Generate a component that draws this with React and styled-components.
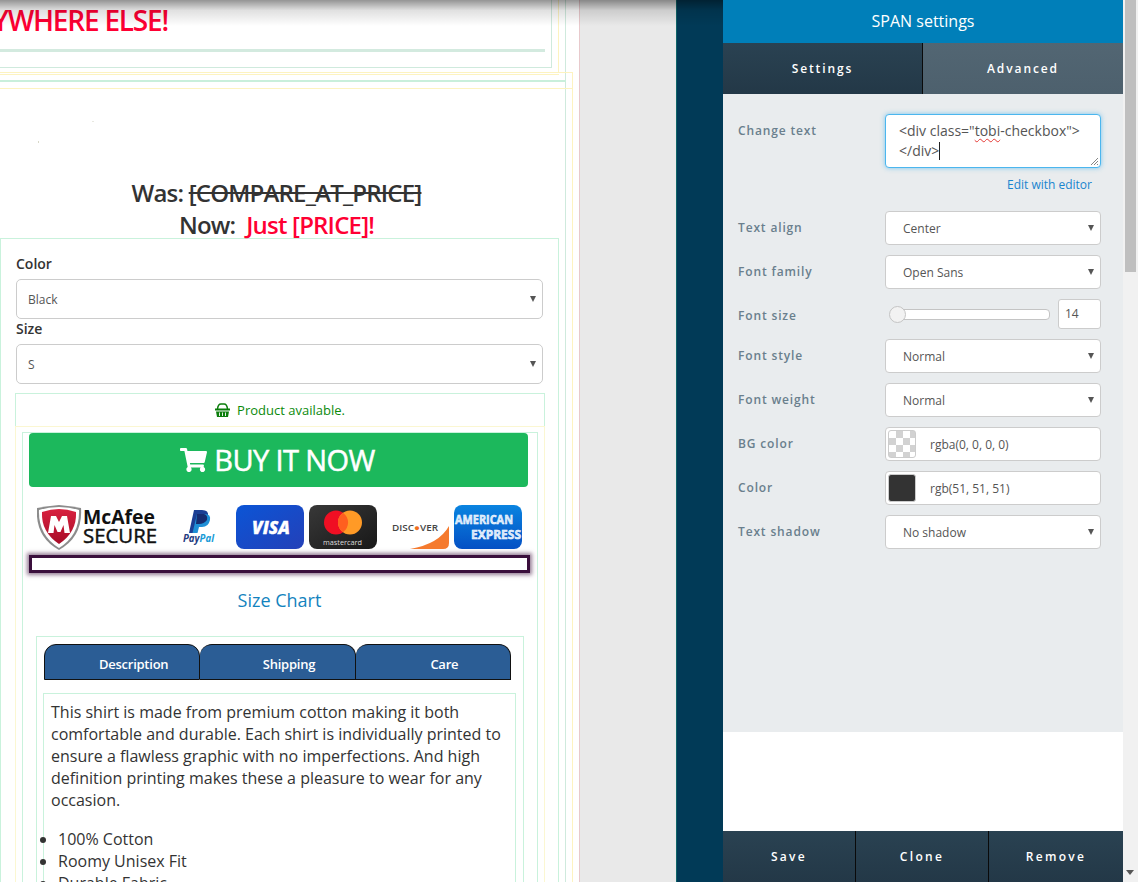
import React from "react";
import styled, { createGlobalStyle } from "styled-components";
import { FaShoppingCart } from "react-icons/fa";

const Global = createGlobalStyle`
  html, body { margin: 0; padding: 0; height: 882px; overflow: hidden; background: #fff; }
  * { box-sizing: border-box; }
  body { font-family: "Open Sans", "Liberation Sans", sans-serif; color: #333; }
`;

const Shell = styled.div`display: flex; width: 1138px; height: 882px; overflow: hidden;`;

const Stage = styled.div`
  position: relative; display: flex; width: 723px; height: 882px; background: #e9e9e9; overflow: hidden;
  &::after {
    content: ""; position: absolute; left: 0; right: 0; top: 0; height: 26px;
    background: linear-gradient(to bottom, rgba(0,0,0,.42), rgba(0,0,0,.12) 40%, rgba(0,0,0,0));
  }
`;
const Page = styled.div`width: 580px; height: 882px; background: #fff; border-right: 1px solid #e8c9cc; overflow: hidden; flex: none;`;
const Gutter = styled.div`flex: 1;`;
const Teal = styled.div`width: 47px; flex: none; background: #013a57; border-left: 1px solid #0d6468;`;

const TopRail = styled.div`width: 566px; height: 72px; border-right: 1px solid #cfeadd;`;
const TopMid = styled.div`width: 559px; height: 72px; border-right: 1px solid #fdf3c0;`;
const TopInner = styled.div`width: 552px; height: 68px; border-right: 1px solid #cfeadd; border-bottom: 1px solid #cfeadd; padding-top: 3px;`;
const Headline = styled.div`
  width: 168px; overflow: hidden; display: flex; justify-content: flex-end; white-space: nowrap;
  font-size: 28px; line-height: 34px; font-weight: 600; letter-spacing: -1.2px; color: #ff0033;
`;
const TopRule = styled.div`width: 545px; height: 3px; margin-top: 12px; background: #d3eadf;`;

const Band = styled.div`width: 573px; height: 17px; border-top: 1px solid #fdf3c0; border-bottom: 1px solid #fdf3c0; border-right: 1px solid #fdf3c0;`;
const BandRail = styled.div`width: 566px; height: 15px; border-right: 1px solid #cfeadd;`;
const BandTick = styled.div`width: 559px; height: 2px; border-bottom: 1px solid #fdf3c0;`;
const BandRule = styled.div`width: 566px; height: 2px; margin-top: 5px; background: #c9efdb;`;

const Body = styled.div`width: 573px; height: 800px; border-right: 1px solid #fdf3c0;`;
const BodyRail = styled.div`width: 566px; height: 800px; border-right: 1px solid #cfeadd;`;
const Specks = styled.svg`display: block; width: 120px; height: 88px;`;
const Price = styled.div`
  width: 553px; height: 61px; text-align: center; font-size: 24px; line-height: 32px; font-weight: 600;
  letter-spacing: -.8px; color: #333;
`;
const Struck = styled.span`text-decoration: line-through;`;
const Red = styled.span`color: #ff0033;`;

const Variants = styled.div`width: 559px; height: 700px; border: 1px solid #c9f2dc; padding: 15px 0 0 14px;`;
const FieldLabel = styled.div`font-size: 14px; line-height: 18px; font-weight: 600; color: #333; padding-top: 1px; margin-bottom: 6px; margin-left: 1px;`;
const BigSelect = styled.div`
  display: flex; align-items: center; width: 527px; height: 40px; margin-left: 1px; padding: 0 6px 0 11px;
  background: #fff; border: 1px solid #ccc; border-radius: 5px; font-size: 12px; color: #555;
`;
const Caret = styled.i`
  margin-left: auto; width: 0; height: 0; border-left: 3.5px solid transparent; border-right: 3.5px solid transparent; border-top: 6px solid #555;
`;
const Available = styled.div`
  display: flex; align-items: center; justify-content: center; gap: 7px; width: 530px; height: 34px; margin-top: 9px;
  border: 1px solid #c9f2dc; font-size: 13px; color: #0b8a0b;
`;
const Basket = styled.svg`width: 15px; height: 14px;`;
const YellowWrap = styled.div`width: 530px; height: 560px; margin-top: -1px; border-top: 1px solid #fbf7d2; border-left: 1px solid #fbf7d2; border-right: 1px solid #fbf7d2; padding: 5px 6px 0;`;
const BuyBox = styled.div`width: 516px; height: 550px; border: 1px solid #c9f2dc; padding: 0 0 0 6px;`;
const BuyButton = styled.div`
  display: flex; align-items: center; justify-content: center; gap: 7px; width: 499px; height: 54px; padding: 0 2px 2px 0;
  background: #1cb85c; border-radius: 4px; color: #fff; font-size: 29px; letter-spacing: -.6px; -webkit-text-stroke: .5px #fff;
  svg { width: 27px; height: 24px; margin-top: 2px; }
`;
const PayStrip = styled.div`
  display: grid; grid-template-columns: 146px 53px 73px 68px 77px 68px; height: 45px; margin: 18px 0 0 8px;
`;
const PayArt = styled.svg`display: block; width: ${p => p.$w}px; height: 45px;`;
const DarkBar = styled.div`
  width: 501px; height: 18px; margin: 5px 0 0 0; background: #fff; border: 3px solid #3a0f3c; box-shadow: 0 0 4px 2px rgba(63,20,64,.55);
`;
const SizeChart = styled.div`width: 501px; margin-top: 14px; text-align: center; font-size: 18px; line-height: 26px; color: #1383be;`;
const TabsBox = styled.div`width: 488px; height: 400px; margin: 23px 0 0 7px; border: 1px solid #c9f2dc; padding: 7px 0 0 7px;`;
const TabRow = styled.div`display: flex; width: 467px; height: 36px;`;
const Tab = styled.div`
  flex: 1; display: flex; align-items: center; justify-content: center; padding: 4px 0 0 23px;
  background: #2b5d95; border: 1px solid #111; border-left-width: ${p => (p.$first ? "1px" : "0")}; border-radius: 12px 12px 0 0;
  color: #fff; font-size: 13px; font-weight: 600; letter-spacing: -.25px;
`;
const Pane = styled.div`width: 473px; height: 300px; margin: 13px 0 0 -1px; border: 1px solid #c9f2dc; padding: 7px 7px 0; font-size: 16px; line-height: 22px; color: #333;`;
const Para = styled.p`margin: 0 0 17px;`;
const Bullets = styled.ul`margin: 0; padding: 0 0 0 7px;`;

const Panel = styled.div`display: flex; flex-direction: column; width: 400px; height: 882px; flex: none;`;
const PanelHead = styled.div`height: 43px; flex: none; background: #007fb9; color: #fff; font-size: 16px; line-height: 43px; text-align: center;`;
const PanelTabs = styled.div`display: flex; height: 51px; flex: none;`;
const PanelTab = styled.div`
  width: 200px; flex: none; display: flex; align-items: center; justify-content: center; color: #fff; font-size: 12px; font-weight: 600; letter-spacing: 1.9px;
  background: ${p => (p.$active ? "linear-gradient(#2a4252,#233847)" : "linear-gradient(#526673,#4d606d)")};
  border-right: ${p => (p.$active ? "1px solid #0a0a0a" : "0")};
`;
const Form = styled.div`height: 638px; flex: none; background: #e9ecee; padding: 20px 22px 0 15px;`;
const Row = styled.div`display: flex; align-items: ${p => p.$top ? "flex-start" : "center"}; height: ${p => p.$h || 34}px; margin-bottom: ${p => p.$mb ?? 10}px;`;
const RowLabel = styled.div`width: 147px; flex: none; font-size: 12px; font-weight: 600; letter-spacing: .85px; color: #6a7f8d; padding-top: ${p => p.$pt || 0}px; padding-bottom: ${p => p.$pb ?? 2}px;`;
const TextBox = styled.div`
  position: relative; width: 216px; height: 54px; padding: 6px 13px; background: #fff; border: 1px solid #4bb6ee; border-radius: 4px;
  box-shadow: 0 0 5px rgba(75,182,238,.7); font-size: 14px; line-height: 20px; color: #555;
`;
const Squiggle = styled.span`text-decoration: underline wavy #e53935 1px; text-underline-offset: 2px;`;
const TextCaret = styled.span`display: inline-block; width: 1px; height: 18px; background: #222; vertical-align: -4px;`;
const Resizer = styled.svg`position: absolute; right: 1px; bottom: 1px; width: 9px; height: 9px;`;
const EditLink = styled.div`height: 17px; margin: 8px 0 18px; padding-right: 9px; text-align: right; font-size: 12px; line-height: 17px; color: #1a85cf;`;
const SmallSelect = styled.div`
  display: flex; align-items: center; width: 216px; height: 34px; padding: 0 6px 0 17px; background: #fff; border: 1px solid #ccc; border-radius: 4px;
  font-size: 12px; color: #555;
`;
const Track = styled.div`position: relative; width: 160px; height: 11px; margin-left: 5px; background: #fff; border: 1px solid #c4c4c4; border-radius: 4px;`;
const Thumb = styled.div`position: absolute; left: -2px; top: -4px; width: 17px; height: 17px; border-radius: 50%; background: #f2f2f2; border: 1px solid #c4c4c4;`;
const NumBox = styled.div`width: 43px; height: 30px; margin-left: 8px; padding-left: 6px; background: #fff; border: 1px solid #ccc; border-radius: 3px; font-size: 12px; line-height: 28px; color: #555;`;
const ColorBox = styled.div`
  display: flex; align-items: center; gap: 14px; width: 216px; height: 34px; padding: 0 2px; background: #fff; border: 1px solid #ccc; border-radius: 4px; font-size: 12px; color: #555;
`;
const Swatch = styled.div`
  width: 28px; height: 28px; border: 1px solid #ccc; border-radius: 3px; background-color: ${p => p.$color || "#fff"};
  ${p => p.$checker && `background-image: conic-gradient(#d2d2d2 25%, #fff 0 50%, #d2d2d2 0 75%, #fff 0); background-size: 14px 14px;`}
`;
const Spare = styled.div`flex: 1; background: #fff;`;
const Footer = styled.div`display: flex; height: 51px; flex: none;`;
const FootBtn = styled.div`
  width: ${p => p.$w}px; flex: none; display: flex; align-items: center; justify-content: center; color: #fff; font-size: 12px; font-weight: 600; letter-spacing: 2.3px;
  background: linear-gradient(#2a4252,#233847); border-left: ${p => (p.$first ? "0" : "1px solid #0a0a0a")};
`;

const Bar = styled.div`position: relative; width: 15px; flex: none; background: #f1f1f1;`;
const BarThumb = styled.div`position: absolute; left: 2px; top: 0; width: 11px; height: 272px; background: #bfbfbf;`;
const BarArrow = styled.i`
  position: absolute; left: 3px; top: 870px; width: 0; height: 0; border-left: 4px solid transparent; border-right: 4px solid transparent; border-top: 5px solid #555;
`;

function McAfee() {
  return (
    <PayArt $w={146} viewBox="0 0 146 45">
      <defs><linearGradient id="sg" x1="0" y1="0" x2="0" y2="1"><stop offset="0" stopColor="#d8213f" /><stop offset="1" stopColor="#a80d28" /></linearGradient></defs>
      <path d="M0 3 Q11 1 22 0 Q33 1 44 3 Q46 32 22 45 Q-2 32 0 3Z" fill="#8c8c8c" />
      <path d="M2 5 Q12 2 22 2 Q32 2 42 5 Q43 30 22 43 Q1 30 2 5Z" fill="#fff" />
      <path d="M5 7 Q14 4 22 4 Q30 4 39 7 Q40 27 22 39 Q4 27 5 7Z" fill="url(#sg)" />
      <path d="M11 28 L14 11 L19 11 L22 17 L25 11 L30 11 L33 28 L27.500 28 L26.500 20 L23.500 27 L20.500 27 L17.500 20 L16.500 28Z" fill="#fff" />
      <text x="46" y="19" fontFamily="Open Sans" fontWeight="700" fontSize="19" fill="#111" textLength="72" lengthAdjust="spacingAndGlyphs">McAfee</text>
      <text x="46" y="38" fontFamily="Open Sans" fontWeight="400" fontSize="20" fill="#111" stroke="#111" strokeWidth=".45" textLength="74" lengthAdjust="spacingAndGlyphs">SECURE</text>
    </PayArt>
  );
}
function PayPal() {
  return (
    <PayArt $w={53} viewBox="0 0 53 45">
      <path d="M11 5 h8 q7 0 6 6 q-1.500 8 -9 8 h-3 l-1.500 9 h-5.500Z" fill="#1c3f94" />
      <path d="M14 9 h8 q6 0 5 6 q-1.500 7 -8 7 h-3 l-1.500 6 h-5Z" fill="#1f8fd6" />
      <path d="M14 9 h7 q4 1 3 6 q-3 4 -8 4 h-3Z" fill="#172c70" />
      <text x="0" y="37" fontFamily="Open Sans" fontWeight="700" fontStyle="italic" fontSize="10" fill="#253b80" textLength="31" lengthAdjust="spacingAndGlyphs">Pay<tspan fill="#179bd7">Pal</tspan></text>
    </PayArt>
  );
}
function Visa() {
  return (
    <PayArt $w={73} viewBox="0 0 73 45">
      <defs><linearGradient id="vg" x1="0" y1="0" x2="1" y2="1"><stop offset="0" stopColor="#0b55d6" /><stop offset="1" stopColor="#2440b8" /></linearGradient></defs>
      <rect width="68" height="44" y="0" rx="8" fill="url(#vg)" />
      <text x="16" y="29" fontFamily="Open Sans" fontWeight="800" fontStyle="italic" fontSize="18" fill="#fff" stroke="#fff" strokeWidth=".3" textLength="38" lengthAdjust="spacingAndGlyphs">VISA</text>
    </PayArt>
  );
}
function Master() {
  return (
    <PayArt $w={68} viewBox="0 0 68 45">
      <defs><linearGradient id="mg" x1="0" y1="0" x2="1" y2="1"><stop offset="0" stopColor="#383838" /><stop offset="1" stopColor="#181818" /></linearGradient></defs>
      <rect width="68" height="44" rx="8" fill="url(#mg)" />
      <circle cx="27" cy="17.500" r="12" fill="#f00f23" />
      <circle cx="41" cy="17.500" r="12" fill="#ff9a26" />
      <path d="M34 7.700 a12 12 0 0 1 0 19.600 a12 12 0 0 1 0 -19.600Z" fill="#ff5f1f" />
      <text x="14" y="40" fontFamily="Open Sans" fontSize="8" fill="#ddd" textLength="39" lengthAdjust="spacingAndGlyphs">mastercard</text>
    </PayArt>
  );
}
function Discover() {
  return (
    <PayArt $w={77} viewBox="0 0 77 45">
      <path d="M33 44 Q62 39 72 21 V38 Q72 44 66 44Z" fill="#f57a2e" />
      <text x="15" y="26" fontFamily="Open Sans" fontWeight="600" fontSize="9" fill="#444" textLength="46" lengthAdjust="spacingAndGlyphs">DISC<tspan fill="#f0701e">●</tspan>VER</text>
    </PayArt>
  );
}
function Amex() {
  return (
    <PayArt $w={68} viewBox="0 0 68 45">
      <defs><linearGradient id="ag" x1="0" y1="0" x2="0" y2="1"><stop offset="0" stopColor="#0a84e0" /><stop offset="1" stopColor="#0450c4" /></linearGradient></defs>
      <rect width="68" height="44" rx="8" fill="url(#ag)" />
      <text x="1" y="19" fontFamily="Open Sans" fontWeight="700" fontSize="12.500" fill="#cfe4fb" stroke="#fff" strokeWidth=".5" textLength="58" lengthAdjust="spacingAndGlyphs">AMERICAN</text>
      <text x="17" y="34" fontFamily="Open Sans" fontWeight="700" fontSize="12.500" fill="#cfe4fb" stroke="#fff" strokeWidth=".5" textLength="50" lengthAdjust="spacingAndGlyphs">EXPRESS</text>
    </PayArt>
  );
}

const settings = [
  ["Text align", "Center"],
  ["Font family", "Open Sans"],
];
const styleRows = [
  ["Font style", "Normal"],
  ["Font weight", "Normal"],
];

export default function App() {
  return (
    <Shell>
      <Global />
      <Stage>
        <Page>
          <TopRail><TopMid><TopInner>
            <Headline>ANYWHERE ELSE!</Headline>
            <TopRule />
          </TopInner></TopMid></TopRail>
          <Band><BandRail><BandTick /><BandRule /></BandRail></Band>
          <Body><BodyRail>
            <Specks viewBox="0 0 120 88">
              <rect x="92" y="32" width="2" height="1" fill="#e8e8e0" />
              <rect x="38" y="52" width="1" height="2" fill="#d8d8c8" />
            </Specks>
            <Price>
              Was: <Struck>[COMPARE_AT_PRICE]</Struck><br />
              Now:&nbsp; <Red>Just [PRICE]!</Red>
            </Price>
            <Variants>
              <FieldLabel>Color</FieldLabel>
              <BigSelect>Black<Caret /></BigSelect>
              <FieldLabel>Size</FieldLabel>
              <BigSelect>S<Caret /></BigSelect>
              <Available>
                <Basket viewBox="0 0 15 14">
                  <path d="M2.500 6 Q3 1 6 1 H9 Q12 1 12.500 6" fill="none" stroke="#0b7d0b" strokeWidth="1.500" />
                  <path d="M0 5.500 H15 V7.500 H0Z M1 8.500 H14 L13 14 H2Z" fill="#0b7d0b" />
                  <path d="M4.500 9.500 V13 M7.500 9.500 V13 M10.500 9.500 V13" stroke="#fff" strokeWidth=".9" />
                </Basket>
                Product available.
              </Available>
              <YellowWrap>
                <BuyBox>
                  <BuyButton><FaShoppingCart />BUY IT NOW</BuyButton>
                  <PayStrip>
                    <McAfee /><PayPal /><Visa /><Master /><Discover /><Amex />
                  </PayStrip>
                  <DarkBar />
                  <SizeChart>Size Chart</SizeChart>
                  <TabsBox>
                    <TabRow>
                      <Tab $first>Description</Tab>
                      <Tab>Shipping</Tab>
                      <Tab>Care</Tab>
                    </TabRow>
                    <Pane>
                      <Para>This shirt is made from premium cotton making it both comfortable and durable. Each shirt is individually printed to ensure a flawless graphic with no imperfections. And high definition printing makes these a pleasure to wear for any occasion.</Para>
                      <Bullets>
                        <li>100% Cotton</li>
                        <li>Roomy Unisex Fit</li>
                        <li>Durable Fabric</li>
                      </Bullets>
                    </Pane>
                  </TabsBox>
                </BuyBox>
              </YellowWrap>
            </Variants>
          </BodyRail></Body>
        </Page>
        <Gutter />
        <Teal />
      </Stage>
      <Panel>
        <PanelHead>SPAN settings</PanelHead>
        <PanelTabs>
          <PanelTab $active>Settings</PanelTab>
          <PanelTab>Advanced</PanelTab>
        </PanelTabs>
        <Form>
          <Row $top $h={54} $mb={0}>
            <RowLabel $pt={8} $pb={0}>Change text</RowLabel>
            <TextBox>
              &lt;div class="<Squiggle>tobi</Squiggle>-checkbox"&gt;<br />&lt;/div&gt;<TextCaret />
              <Resizer viewBox="0 0 9 9"><path d="M1 8 L8 1 M4 8 L8 4 M7 8 L8 7" stroke="#666" strokeWidth=".8" /></Resizer>
            </TextBox>
          </Row>
          <EditLink>Edit with editor</EditLink>
          {settings.map(([l, v]) => (
            <Row key={l}><RowLabel>{l}</RowLabel><SmallSelect>{v}<Caret /></SmallSelect></Row>
          ))}
          <Row $h={30}>
            <RowLabel $pt={2} $pb={0}>Font size</RowLabel>
            <Track><Thumb /></Track>
            <NumBox>14</NumBox>
          </Row>
          {styleRows.map(([l, v]) => (
            <Row key={l}><RowLabel>{l}</RowLabel><SmallSelect>{v}<Caret /></SmallSelect></Row>
          ))}
          <Row><RowLabel>BG color</RowLabel><ColorBox><Swatch $checker />rgba(0, 0, 0, 0)</ColorBox></Row>
          <Row><RowLabel>Color</RowLabel><ColorBox><Swatch $color="#333" />rgb(51, 51, 51)</ColorBox></Row>
          <Row><RowLabel>Text shadow</RowLabel><SmallSelect>No shadow<Caret /></SmallSelect></Row>
        </Form>
        <Spare />
        <Footer>
          <FootBtn $first $w={132}>Save</FootBtn>
          <FootBtn $w={133}>Clone</FootBtn>
          <FootBtn $w={135}>Remove</FootBtn>
        </Footer>
      </Panel>
      <Bar><BarThumb /><BarArrow /></Bar>
    </Shell>
  );
}
